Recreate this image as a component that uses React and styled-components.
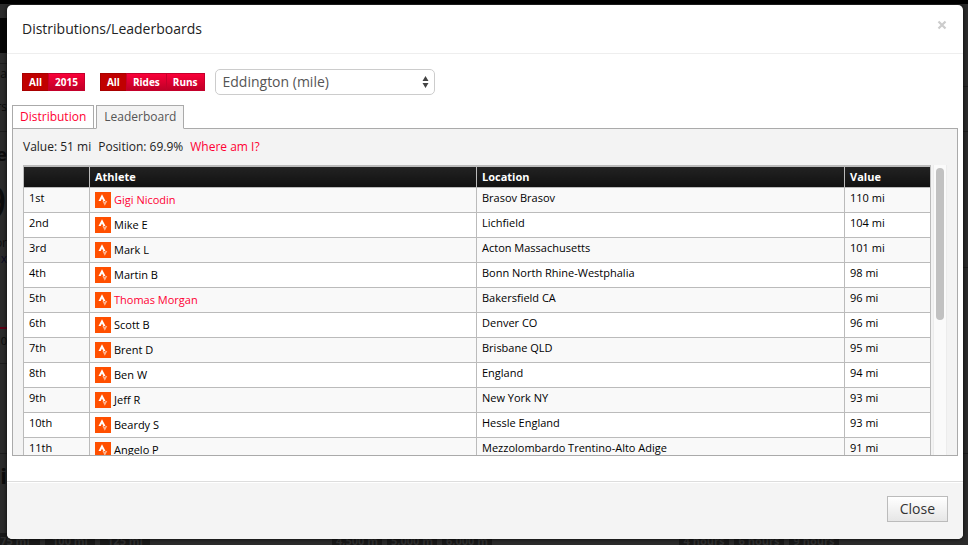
import React, { useRef, useState } from 'react';
import styled, { createGlobalStyle } from 'styled-components';

const GlobalStyle = createGlobalStyle`
  * {
    box-sizing: border-box;
  }

  body {
    margin: 0;
    background: #2b2b2b;
    font-family: 'Open Sans', 'Noto Sans', sans-serif;
    font-size: 12px;
    color: #222;
  }

  button, select {
    font-family: inherit;
  }
`;

const Page = styled.div`
  position: relative;
  height: 100vh;
  min-height: 360px;
  padding: 5px 5px 6px 7px;
  overflow: hidden;
`;

// the dimmed page behind the dialog
const Backdrop = styled.div`
  position: absolute;
  inset: 0;
  overflow: hidden;
  border-top: 4px solid #000;
  color: #0c0c0c;
`;

const Ghost = styled.span`
  position: absolute;
  top: ${props => props.$top}px;
  right: calc(100% - 7px);
  font-size: ${props => props.$size}px;
  font-weight: ${props => (props.$bold ? 700 : 400)};
  line-height: 1;
  color: ${props => props.$color || '#0c0c0c'};
`;

const GhostBlock = styled.div`
  position: absolute;
  top: ${props => props.$top}px;
  left: ${props => (props.$right ? 'auto' : 0)};
  right: ${props => (props.$right ? 0 : 'auto')};
  width: 7px;
  height: ${props => props.$height}px;
  background: ${props => props.$color || '#1d1d1d'};
`;

const GhostChips = styled.div`
  position: absolute;
  bottom: 0;
  left: ${props => props.$left};
  display: flex;
  gap: 5px;
`;

const GhostChip = styled.span`
  height: 12px;
  width: 50px;
  background: #191919;
  color: #303030;
  font-size: 11px;
  font-weight: 700;
  line-height: 16px;
  text-align: center;
  white-space: nowrap;
  overflow: hidden;
`;

const Modal = styled.div`
  position: relative;
  display: flex;
  flex-direction: column;
  height: 100%;
  background: #fff;
  border-radius: 5px;
  box-shadow: 0 0 4px rgba(0, 0, 0, 0.8);
  overflow: hidden;
`;

const Header = styled.header`
  display: flex;
  justify-content: space-between;
  align-items: center;
  height: 49px;
  padding: 0 15px;
  border-bottom: 1px solid #eee;
`;

const Title = styled.h1`
  margin: 0;
  font-size: 14px;
  font-weight: 500;
  line-height: 20px;
  color: #222;
`;

const Dismiss = styled.button`
  display: flex;
  padding: 0 1px 8px;
  border: 0;
  background: none;
  cursor: pointer;
`;

const Body = styled.div`
  display: flex;
  flex: 1;
  flex-direction: column;
  min-height: 0;
  padding: 15px 5px 25px;
`;

const Filters = styled.div`
  display: flex;
  align-items: center;
  padding: 0 10px;
`;

const PillGroup = styled.div`
  display: flex;
  margin-right: ${props => props.$gap}px;
`;

const Pill = styled.button`
  height: 18px;
  padding: 0 6px;
  border: 1px solid ${props => (props.$active ? '#a80000' : '#c4002b')};
  border-right-width: ${props => (props.$last ? '1px' : 0)};
  background: ${props => (props.$active ? '#c00000' : 'linear-gradient(#f90038, #bf0027)')};
  color: #fff;
  font-size: 10px;
  font-weight: 700;
  line-height: 16px;
  cursor: pointer;
`;

const SelectWrap = styled.div`
  position: relative;
  width: 220px;
`;

const Select = styled.select`
  appearance: none;
  display: block;
  width: 100%;
  height: 26px;
  padding: 0 24px 2px 7px;
  border: 1px solid #ccc;
  border-radius: 5px;
  background: #fff;
  color: #555;
  font-size: 14px;
`;

const SelectArrows = styled.svg`
  position: absolute;
  top: 7px;
  right: 6px;
  pointer-events: none;
`;

const Tabs = styled.div`
  display: flex;
  gap: 2px;
  margin: 10px 0 -1px;
`;

const Tab = styled.button`
  height: 24px;
  padding: 0 7px;
  border: 1px solid #aaa;
  border-bottom-color: ${props => (props.$active ? '#f3f3f3' : '#aaa')};
  background: ${props => (props.$active ? '#f3f3f3' : '#fff')};
  color: ${props => (props.$active ? '#555' : '#ff0033')};
  font-size: 12px;
  line-height: 20px;
  cursor: pointer;
  z-index: 1;
`;

const Panel = styled.section`
  display: flex;
  flex: 1;
  flex-direction: column;
  min-height: 0;
  padding: 8px 10px 0;
  border: 1px solid #aaa;
  background: #f3f3f3;
`;

const Summary = styled.p`
  display: flex;
  gap: 7px;
  margin: 0;
  padding-bottom: 8px;
  font-size: 12px;
  line-height: 20px;
`;

const Link = styled.a`
  color: #ff0033;
  text-decoration: none;
`;

const ScrollArea = styled.div`
  display: flex;
  flex: 1;
  gap: 2px;
  min-height: 0;
`;

const Viewport = styled.div`
  flex: 1;
  overflow-y: auto;
  scrollbar-width: none;
`;

const ScrollTrack = styled.div`
  width: 14px;
  padding: 3px 2px 0;
  border: 1px solid #ececec;
  border-width: 0 1px;
  background: #fafafa;
`;

const ScrollThumb = styled.div`
  width: 8px;
  height: 152px;
  margin: 0 auto;
  border-radius: 4px;
  background: #c1c1c1;
`;

const Table = styled.table`
  width: 100%;
  border-collapse: collapse;
  table-layout: fixed;
  color: #000;
`;

const Th = styled.th`
  width: ${props => props.$width};
  height: 21px;
  padding: 0 5px;
  border: 1px solid #bbb;
  border-top-width: 2px;
  background: linear-gradient(#222, #111);
  color: #fff;
  font-size: 11px;
  font-weight: 700;
  line-height: 19px;
  text-align: left;
`;

const Row = styled.tr`
  background: ${props => (props.$odd ? '#f9f9f9' : '#fff')};
`;

const Td = styled.td`
  height: 25px;
  padding: 0 5px 4px;
  border: 1px solid #bbb;
  font-size: 11px;
  line-height: 20px;
`;

const AthleteCell = styled(Td)`
  padding: 0 5px;
`;

const Athlete = styled.div`
  display: flex;
  align-items: center;
  gap: 3px;
  line-height: 18px;
`;

const Footer = styled.footer`
  display: flex;
  justify-content: flex-end;
  padding: 14px 15px 17px;
  border-top: 1px solid #ddd;
  background: #f4f4f4;
  box-shadow: inset 0 1px 0 #fff;
`;

const CloseButton = styled.button`
  height: 26px;
  padding: 0 12px;
  border: 1px solid #bbb;
  background: linear-gradient(#fff, #e6e6e6);
  color: #333;
  font-size: 14px;
  line-height: 24px;
  cursor: pointer;
`;

const StravaIcon = () => (
  <svg width="16" height="16" viewBox="0 0 16 16" aria-hidden="true">
    <rect width="16" height="16" fill="#ff4f00" />
    <path d="M7 2.2 L3.5 9 H5.7 L7 6.4 L8.3 9 H10.5 Z" fill="#fff" />
    <path d="M10.5 9 L9.8 10.6 L9 9 H7.4 L9.8 13.8 L12.3 9 Z" fill="#ffb894" />
  </svg>
);

const athletes = [
  ['1st', 'Gigi Nicodin', 'Brasov Brasov', '110 mi', true],
  ['2nd', 'Mike E', 'Lichfield', '104 mi'],
  ['3rd', 'Mark L', 'Acton Massachusetts', '101 mi'],
  ['4th', 'Martin B', 'Bonn North Rhine-Westphalia', '98 mi'],
  ['5th', 'Thomas Morgan', 'Bakersfield CA', '96 mi', true],
  ['6th', 'Scott B', 'Denver CO', '96 mi'],
  ['7th', 'Brent D', 'Brisbane QLD', '95 mi'],
  ['8th', 'Ben W', 'England', '94 mi'],
  ['9th', 'Jeff R', 'New York NY', '93 mi'],
  ['10th', 'Beardy S', 'Hessle England', '93 mi'],
  ['11th', 'Angelo P', 'Mezzolombardo Trentino-Alto Adige', '91 mi'],
];

const Pills = ({ options, label, gap }) => {
  const [selected, setSelected] = useState(options[0]);

  return (
    <PillGroup role="group" aria-label={label} $gap={gap}>
      {options.map((option, i) => (
        <Pill
          key={option}
          type="button"
          aria-pressed={option === selected}
          $active={option === selected}
          $last={i === options.length - 1}
          onClick={() => setSelected(option)}
        >
          {option}
        </Pill>
      ))}
    </PillGroup>
  );
};

const Leaderboard = () => {
  const viewport = useRef(null);
  const [offset, setOffset] = useState(0);

  const handleScroll = () => {
    const { scrollTop, clientHeight, scrollHeight } = viewport.current;
    const range = scrollHeight - clientHeight;
    setOffset(range > 0 ? (scrollTop / range) * (clientHeight - 158) : 0);
  };

  return (
    <ScrollArea>
      <Viewport ref={viewport} onScroll={handleScroll}>
        <Table>
          <thead>
            <tr>
              <Th $width="66px" aria-label="Position" />
              <Th $width="auto">Athlete</Th>
              <Th $width="368px">Location</Th>
              <Th $width="86px">Value</Th>
            </tr>
          </thead>
          <tbody>
            {athletes.map(([position, name, location, value, linked], i) => (
              <Row key={position} $odd={i % 2 === 0}>
                <Td>{position}</Td>
                <AthleteCell>
                  <Athlete>
                    <StravaIcon />
                    {linked ? <Link href="#athlete">{name}</Link> : name}
                  </Athlete>
                </AthleteCell>
                <Td>{location}</Td>
                <Td>{value}</Td>
              </Row>
            ))}
          </tbody>
        </Table>
      </Viewport>
      <ScrollTrack>
        <ScrollThumb style={{ transform: `translateY(${offset}px)` }} />
      </ScrollTrack>
    </ScrollArea>
  );
};

const App = () => (
  <>
    <GlobalStyle />
    <Page>
      <Backdrop aria-hidden="true">
        <GhostBlock $top={14} $height={35} $color="#050505" />
        <GhostBlock $top={59} $height={1} />
        <GhostBlock $top={127} $height={1} />
        <GhostBlock $top={323} $height={2} $color="#5c0015" />
        <GhostBlock $top={359} $height={1} />
        <GhostBlock $top={449} $height={1} />
        <GhostBlock $right $top={82} $height={1} />
        <GhostBlock $right $top={127} $height={1} />
        <GhostBlock $right $top={263} $height={1} />
        <GhostBlock $right $top={449} $height={1} />
        <Ghost $top={64} $size={12}>na</Ghost>
        <Ghost $top={97} $size={12}>rs</Ghost>
        <Ghost $top={141} $size={18} $bold>e</Ghost>
        <Ghost $top={174} $size={48}>9</Ghost>
        <Ghost $top={233} $size={12}>or</Ghost>
        <Ghost $top={249} $size={12} $color="#0b0b25">ax</Ghost>
        <Ghost $top={331} $size={11}>0</Ghost>
        <Ghost $top={460} $size={22} $bold>i</Ghost>
        <GhostChips $left="-10px">
          <GhostChip>75 mi</GhostChip>
          <GhostChip>100 mi</GhostChip>
          <GhostChip>125 mi</GhostChip>
        </GhostChips>
        <GhostChips $left="332px">
          <GhostChip>4,500 m</GhostChip>
          <GhostChip>5,000 m</GhostChip>
          <GhostChip>6,000 m</GhostChip>
        </GhostChips>
        <GhostChips $left="679px">
          <GhostChip>4 hours</GhostChip>
          <GhostChip>6 hours</GhostChip>
          <GhostChip>9 hours</GhostChip>
        </GhostChips>
      </Backdrop>

      <Modal role="dialog" aria-labelledby="dialog-title">
        <Header>
          <Title id="dialog-title">Distributions/Leaderboards</Title>
          <Dismiss type="button" aria-label="Dismiss">
            <svg width="10" height="10" viewBox="0 0 10 10">
              <path d="M1.5 1.5 L8.5 8.5 M8.5 1.5 L1.5 8.5" stroke="#ccc" strokeWidth="2.2" />
            </svg>
          </Dismiss>
        </Header>

        <Body>
          <Filters>
            <Pills options={['All', '2015']} label="Year" gap={15} />
            <Pills options={['All', 'Rides', 'Runs']} label="Activity" gap={10} />
            <SelectWrap>
              <Select aria-label="Statistic" defaultValue="eddington">
                <option value="eddington">Eddington (mile)</option>
              </Select>
              <SelectArrows width="7" height="12" viewBox="0 0 7 12">
                <path d="M3.5 0 L6.5 5 H0.5 Z M3.5 12 L6.5 7 H0.5 Z" fill="#444" />
              </SelectArrows>
            </SelectWrap>
          </Filters>

          <Tabs role="tablist">
            <Tab type="button" role="tab" aria-selected="false">Distribution</Tab>
            <Tab type="button" role="tab" aria-selected="true" $active>Leaderboard</Tab>
          </Tabs>

          <Panel role="tabpanel">
            <Summary>
              <span>Value: 51 mi</span>
              <span>Position: 69.9%</span>
              <Link href="#me">Where am I?</Link>
            </Summary>
            <Leaderboard />
          </Panel>
        </Body>

        <Footer>
          <CloseButton type="button">Close</CloseButton>
        </Footer>
      </Modal>
    </Page>
  </>
);

export default App;
